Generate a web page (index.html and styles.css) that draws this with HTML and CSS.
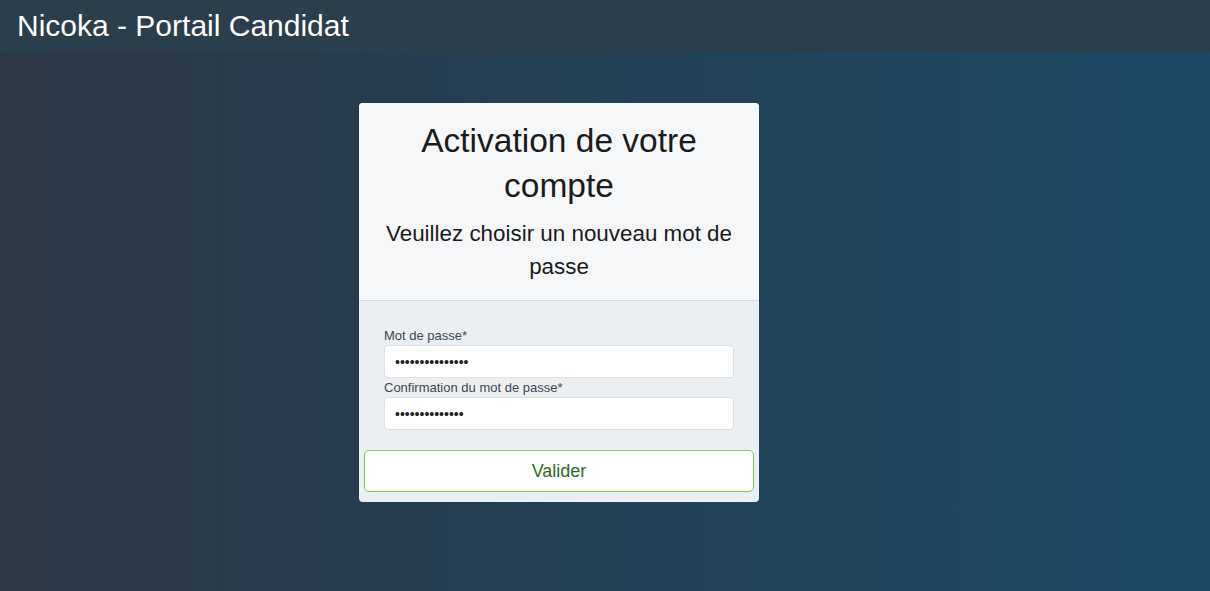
FILE: index.html
```html
<!DOCTYPE html>
<html lang="fr">
<head>
  <meta charset="UTF-8">
  <title>Nicoka - Portail Candidat</title>
  <link rel="stylesheet" href="styles.css">
</head>
<body>

  <div class="barre">
    <h1>Nicoka - Portail Candidat</h1>
  </div>

  <div class="contenu">
    <div class="carte">
      <!-- En-tête de la carte -->
      <div class="carte-entete">
        <h2>Activation de votre compte</h2>
        <p>Veuillez choisir un nouveau mot de passe</p>
      </div>

      <!-- Formulaire -->
      <div class="carte-corps">
        <div class="champs">
          <label for="mdp">Mot de passe*</label>
          <input type="password" id="mdp" value="motdepasse12345">
          <label for="mdp2">Confirmation du mot de passe*</label>
          <input type="password" id="mdp2" value="motdepasse1234">
        </div>
        <button type="button">Valider</button>
      </div>
    </div>
  </div>

</body>
</html>
```

FILE: styles.css
```css
* {
  box-sizing: border-box;
}

html, body {
  height: 100%;
}

body {
  margin: 0;
  font-family: 'Liberation Sans', Arial, sans-serif;
  background: linear-gradient(to right, #2c3745, #1b4a66);
  display: flex;
  flex-direction: column;
}

.barre {
  height: 52px;
  background: #2b3e4b;
  display: flex;
  align-items: center;
  padding: 0 17px;
}

.barre h1 {
  margin: 0;
  font-size: 30px;
  font-weight: normal;
  color: #fff;
}

.contenu {
  flex: 1;
  display: flex;
  justify-content: flex-start;
  align-items: flex-start;
  padding: 51px 0 0 359px;
}

.carte {
  width: 400px;
  border-radius: 4px;
  overflow: hidden;
  background: #eceff1;
}

.carte-entete {
  background: #f6f7f9;
  border-bottom: 1px solid #d4d8dc;
  text-align: center;
  padding: 15px 20px 17px;
  color: #1b1b1b;
}

.carte-entete h2 {
  margin: 0;
  font-size: 33.5px;
  font-weight: normal;
  line-height: 45px;
}

.carte-entete p {
  margin: 9px 0 0;
  font-size: 22.4px;
  line-height: 33px;
}

.carte-corps {
  padding: 27px 5px 10px;
}

.champs {
  padding: 0 20px;
  display: flex;
  flex-direction: column;
}

label {
  font-size: 13px;
  color: #404650;
  line-height: 16px;
}

input {
  height: 33px;
  margin: 1px 0 2px;
  padding: 0 10px;
  border: 1px solid #dcdfe3;
  border-radius: 4px;
  background: #fff;
  font-size: 14px;
  color: #222;
}

button {
  display: block;
  width: 100%;
  height: 42px;
  margin-top: 18px;
  background: #fff;
  border: 1px solid #7ccc4e;
  border-radius: 5px;
  color: #2b6a1e;
  font-family: inherit;
  font-size: 18px;
  cursor: pointer;
}
```
